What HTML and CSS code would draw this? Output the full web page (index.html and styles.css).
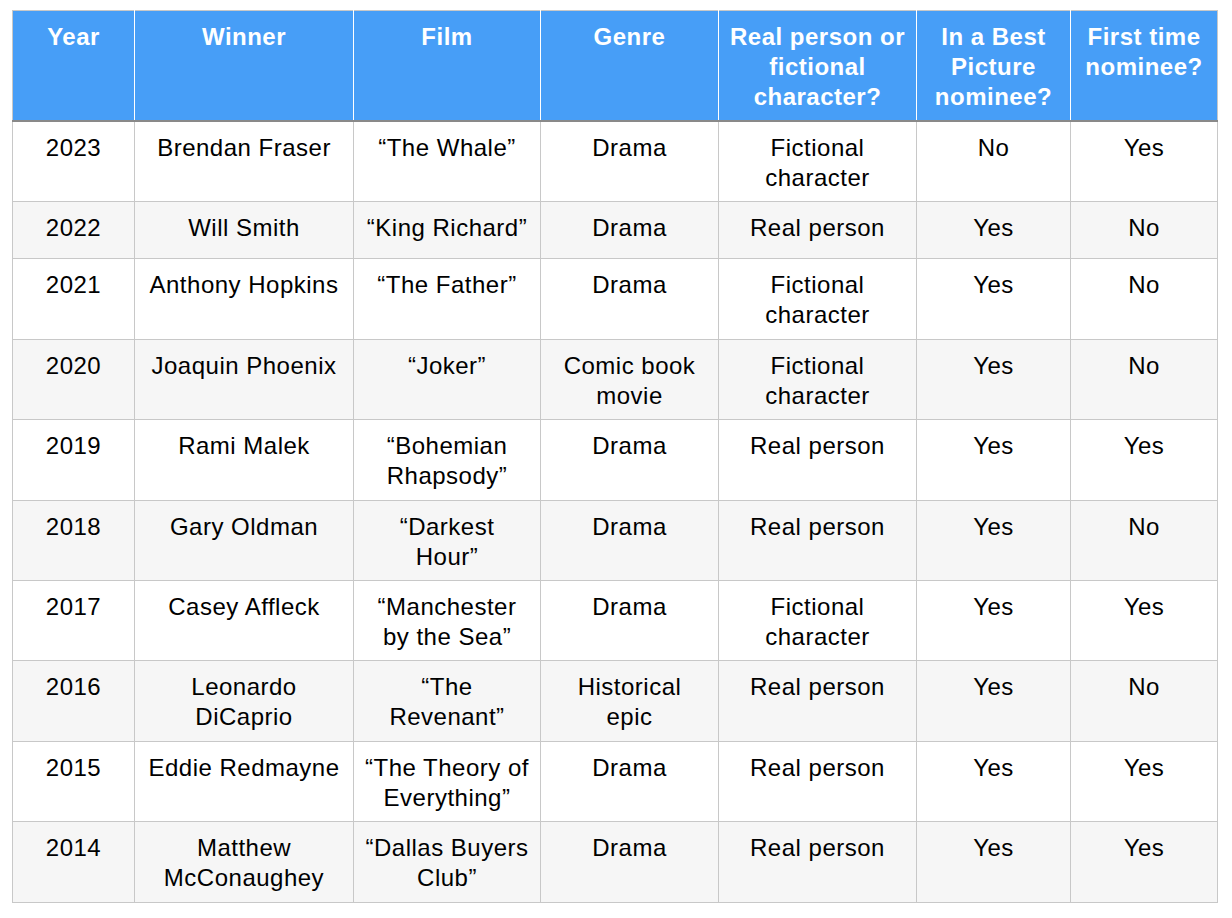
FILE: index.html
```html
<!DOCTYPE html>
<html lang="en">
<head>
<meta charset="utf-8">
<title>Best Actor winners</title>
<link rel="stylesheet" href="styles.css">
</head>
<body>
<table class="awards">
  <colgroup>
    <col class="c-year">
    <col class="c-winner">
    <col class="c-film">
    <col class="c-genre">
    <col class="c-real">
    <col class="c-bp">
    <col class="c-first">
  </colgroup>
  <thead>
    <tr>
      <th>Year</th>
      <th>Winner</th>
      <th>Film</th>
      <th>Genre</th>
      <th>Real person or<br>fictional<br>character?</th>
      <th>In a Best<br>Picture<br>nominee?</th>
      <th>First time<br>nominee?</th>
    </tr>
  </thead>
  <tbody>
    <tr><td>2023</td><td>Brendan Fraser</td><td>“The Whale”</td><td>Drama</td><td>Fictional<br>character</td><td>No</td><td>Yes</td></tr>
    <tr class="one"><td>2022</td><td>Will Smith</td><td>“King Richard”</td><td>Drama</td><td>Real person</td><td>Yes</td><td>No</td></tr>
    <tr><td>2021</td><td>Anthony Hopkins</td><td>“The Father”</td><td>Drama</td><td>Fictional<br>character</td><td>Yes</td><td>No</td></tr>
    <tr><td>2020</td><td>Joaquin Phoenix</td><td>“Joker”</td><td>Comic book<br>movie</td><td>Fictional<br>character</td><td>Yes</td><td>No</td></tr>
    <tr><td>2019</td><td>Rami Malek</td><td>“Bohemian<br>Rhapsody”</td><td>Drama</td><td>Real person</td><td>Yes</td><td>Yes</td></tr>
    <tr><td>2018</td><td>Gary Oldman</td><td>“Darkest<br>Hour”</td><td>Drama</td><td>Real person</td><td>Yes</td><td>No</td></tr>
    <tr><td>2017</td><td>Casey Affleck</td><td>“Manchester<br>by the Sea”</td><td>Drama</td><td>Fictional<br>character</td><td>Yes</td><td>Yes</td></tr>
    <tr><td>2016</td><td>Leonardo<br>DiCaprio</td><td>“The<br>Revenant”</td><td>Historical<br>epic</td><td>Real person</td><td>Yes</td><td>No</td></tr>
    <tr><td>2015</td><td>Eddie Redmayne</td><td>“The Theory of<br>Everything”</td><td>Drama</td><td>Real person</td><td>Yes</td><td>Yes</td></tr>
    <tr><td>2014</td><td>Matthew<br>McConaughey</td><td>“Dallas Buyers<br>Club”</td><td>Drama</td><td>Real person</td><td>Yes</td><td>Yes</td></tr>
  </tbody>
</table>
</body>
</html>
```

FILE: styles.css
```css
html, body {
  margin: 0;
  padding: 0;
  background: #ffffff;
}

body {
  font-family: "Liberation Sans", Arial, Helvetica, sans-serif;
  font-size: 24px;
  letter-spacing: 0.5px;
  color: #000000;
}

.awards {
  margin: 10px 0 0 12px;
  border-collapse: collapse;
  table-layout: fixed;
  width: 1205px;
}

.c-year { width: 122px; }
.c-winner { width: 219px; }
.c-film { width: 187px; }
.c-genre { width: 178px; }
.c-real { width: 198px; }
.c-bp { width: 154px; }
.c-first { width: 147px; }

.awards th {
  background: #479ef7;
  color: #ffffff;
  font-weight: bold;
  line-height: 30px;
  padding: 11px 4px 8px;
  text-align: center;
  vertical-align: top;
  border-top: 1px solid #c8c8c8;
  border-left: 1px solid #ffffff;
  border-right: 1px solid #ffffff;
  border-bottom: 2px solid #898989;
}

.awards th:first-child {
  border-left-color: #c8c8c8;
}

.awards th:last-child {
  border-right-color: #c8c8c8;
}

.awards td {
  line-height: 30px;
  padding: 11px 4px 8.4px;
  text-align: center;
  vertical-align: top;
  border: 1px solid #c8c8c8;
}

.awards tr.one td {
  padding-bottom: 15px;
}

.awards tbody tr:nth-child(even) td {
  background: #f6f6f6;
}
```
